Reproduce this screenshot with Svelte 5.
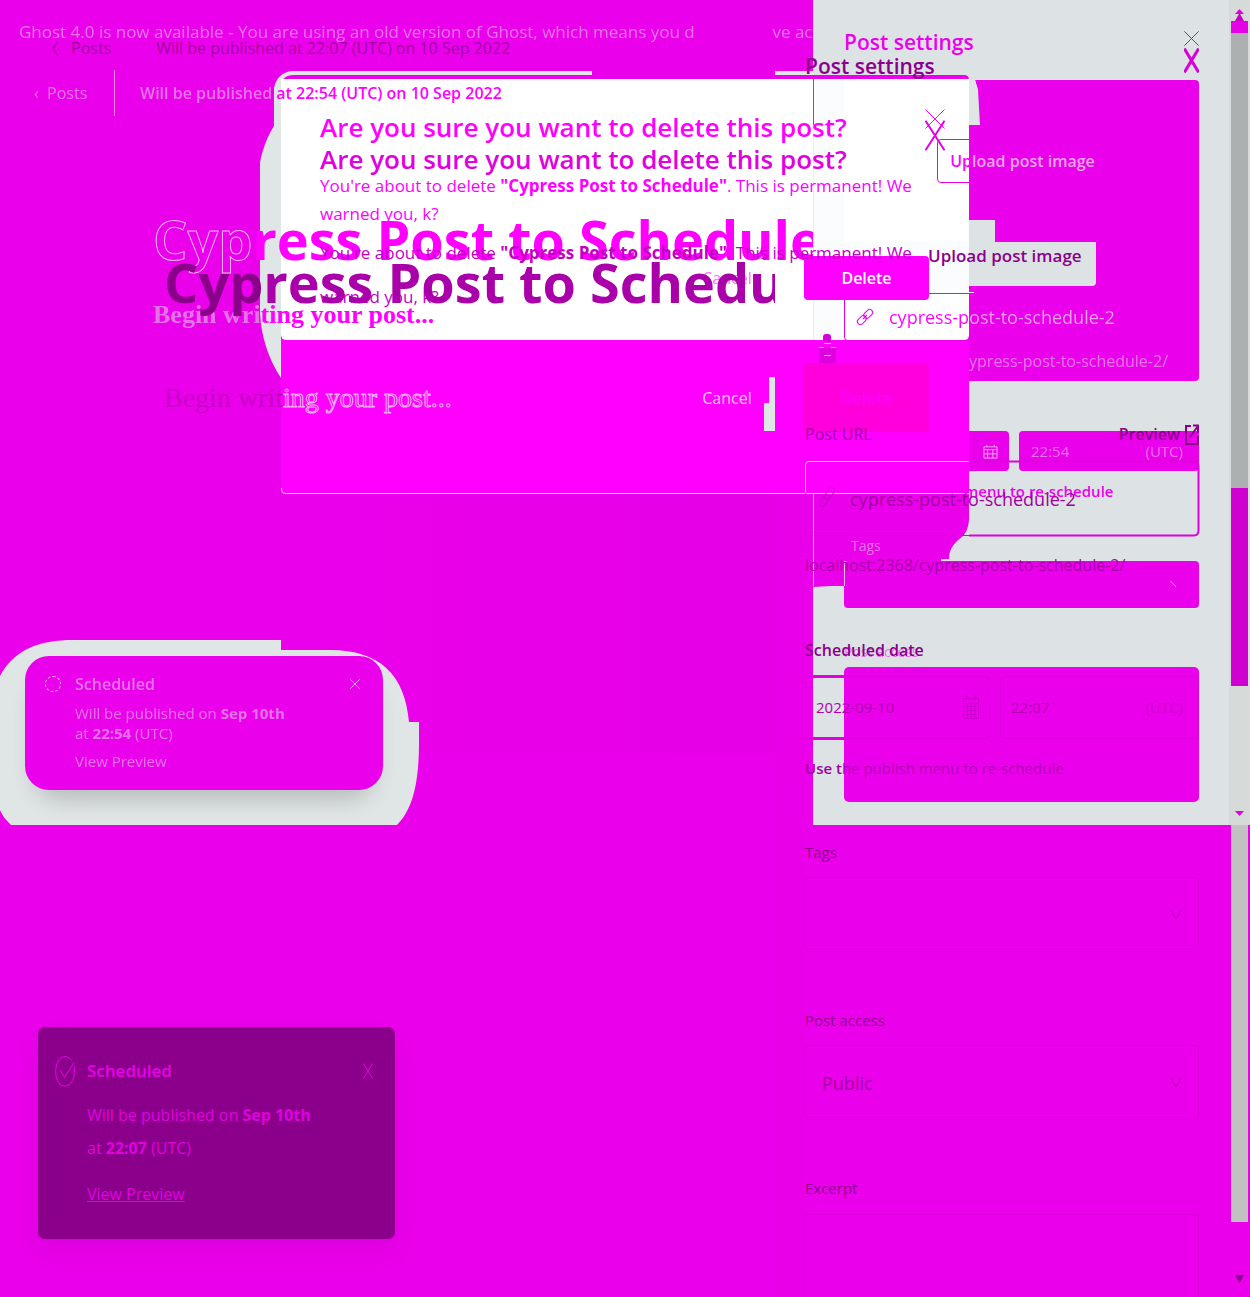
<script>
  const olderUrl = 'cypress-post-to-schedule-2';
</script>

{#snippet cross(cls)}
  <svg class={cls} viewBox="0 0 20 20" preserveAspectRatio="none" aria-hidden="true">
    <path d="M0.5 0.5L19.5 19.5M19.5 0.5L0.5 19.5" vector-effect="non-scaling-stroke" />
  </svg>
{/snippet}

<div class="page">
  <svg class="backdrop" viewBox="0 0 1250 1297" preserveAspectRatio="none" aria-hidden="true">
    <defs>
      <filter id="soft" x="-20%" y="-40%" width="140%" height="180%"><feGaussianBlur stdDeviation="11" /></filter>
      <clipPath id="halo"><path d="M281 640V650H330C380 650 405 675 409 722H419V742C419 785 412 810 397 825H11C5 819 2 815 0 810V676C14 650 38 640 74 640Z" /></clipPath>
      <linearGradient id="dusk" x1="0" y1="0" x2="1" y2="0">
        <stop offset="0" stop-color="#eb00eb" />
        <stop offset="1" stop-color="#e500e6" />
      </linearGradient>
    </defs>

    <rect x="281" y="493" width="494" height="260" fill="url(#dusk)" />
    <rect x="775" y="493" width="30" height="804" fill="#e900e9" />

    <rect x="813" width="437" height="825" fill="#dde2e4" />
    <rect x="1229" width="21" height="825" fill="#d6dad9" />
    <rect x="1231" y="21" width="17" height="12" fill="#e600e6" />
    <rect x="1231" y="33" width="17" height="455" fill="#acb0b0" />
    <rect x="1231" y="488" width="17" height="198" fill="#d000d0" />
    <rect x="1231" y="825" width="17" height="397" fill="#c1c1c1" />
    <path d="M1235 14L1239.500 9L1244 14Z" fill="#e000e0" />
    <path d="M1235 21L1239.500 13L1244 21Z" fill="#c400c4" />
    <path d="M1235 811H1244L1239.500 816Z" fill="#e000e0" />
    <path d="M1235 1275H1244L1239.500 1283Z" fill="#8b008b" />

    <g clip-path="url(#halo)">
      <rect y="640" width="420" height="185" fill="#e0e5e5" />
      <rect x="34" y="680" width="340" height="120" rx="26" fill="#b8bcbc" filter="url(#soft)" />
    </g>
    <rect x="25" y="656" width="358" height="134" rx="24" fill="#eb00eb" />

    <path d="M292 71H592V80H281V378C268 358 261 336 260 312V163C262 150 268 135 274 126V88C276 78 282 72 292 71ZM775 71H813V80H775Z" fill="#e0e5e5" />

    <path d="M975 80H1195Q1199 80 1199 84V377Q1199 381 1195 381H969V125H980L978 90Z" fill="#eb00eb" />
    <path d="M969 80H975L978 90V125H969Z" fill="#e0e5e5" />
    <path d="M969 220H995V242H1096V282Q1096 286 1092 286H969Z" fill="#dde2e4" />
    <path d="M969 292.500H974" stroke="#dde2e4" />

    <path d="M281 88Q281 75 294 75H964Q969 75 969 80V340H281Z" fill="#eb00eb" />
    <path d="M281 79H969V335Q969 340 964 340H286Q281 340 281 335Z" fill="#fff" />
    <path d="M813 79H969V340H813Z" fill="#fafcfe" />
    <path d="M844 79H969V242H844ZM844 293H969V340H844Z" fill="#fff" />
    <path d="M813.500 125V340" stroke="#e8edf0" />
    <path d="M813.500 79V125" stroke="#f0f" />
    <path d="M281 335Q281 340 286 340H964Q969 340 969 335V494H281Z" fill="#f0f" />
    <path d="M813 494H969V520C968 529 966 533 962 537C954 543 949 549 949 559H941V561H844V586H831L813 587Z" fill="#eb00eb" />
    <path d="M281.500 488Q281.500 493.500 285 493.500H969" fill="none" stroke="#e0e5e5" />
    <path d="M769 377H775V431H764V403H769Z" fill="#e0e5e5" />

    <rect x="823" y="334" width="8" height="8" rx="3" fill="#d800d8" />
    <path d="M819 348H836V363H819Z" fill="#df00df" />
    <path d="M819 347.500H824M831 347.500H836M824 343.500H831M824 355.500H831" stroke="#ecc8f0" />

    <path d="M969 431H1005Q1009 431 1009 435V467Q1009 471 1005 471H969Z" fill="#eb00eb" />
    <rect x="1019" y="431" width="180" height="40" rx="4" fill="#eb00eb" />
    <rect x="844" y="561" width="355" height="47" rx="4" fill="#eb00eb" />
    <rect x="844" y="667" width="355" height="135" rx="5" fill="#eb00eb" />

    <path d="M805.500 493V465Q805.500 461.500 809 461.500H969" fill="none" stroke="#f3c9f6" />
    <path d="M805.500 493V531Q805.500 535.500 809 535.500H969" fill="none" stroke="#dc00dc" />
    <path d="M969 461.500H1194Q1198.500 461.500 1198.500 466V530Q1198.500 535.500 1194 535.500H969" fill="none" stroke="#df00df" stroke-width="2" />
    <path d="M813.500 493V586M844.500 561V586" stroke="#e8b8ea" />
    <rect x="805.500" y="676.500" width="184" height="62" rx="4" fill="none" stroke="#dc00dc" />
    <rect x="1000.500" y="676.500" width="198" height="62" rx="4" fill="none" stroke="#dc00dc" />
    <path d="M813 676.500H844M813 738.500H844" stroke="#e200e2" stroke-width="3" />
  </svg>

  <div class="layer older">
    <p class="banner"><span class="speck">Ghost 4.0 is now available - You are using an old version of Ghost, which means you d</span><span class="speck tail">ve ac</span></p>
    <nav class="crumbs">
      <a class="speck" href="#posts">‹&nbsp; Posts</a>
      <span class="when"><span class="speck">Will be published</span> at 22:54 (UTC) on 10 Sep 2022</span>
    </nav>
    <div class="title"><span class="hollow">Cyp</span>ress Post to Schedule</div>
    <div class="begin"><span class="speck">Begin wri</span>ting your post...</div>
  </div>

  <aside class="layer side old-side" aria-label="Previous settings">
    <header class="row head"><h2>Post settings</h2><button aria-label="Close previous settings">{@render cross('x15')}</button></header>
    <button class="upload"><span>Up</span>load post image</button>
    <label class="url">
      <svg class="link" viewBox="0 0 16 16" aria-hidden="true"><g transform="rotate(-45 8 8)"><rect x="-1.500" y="5" width="10" height="6" rx="3" /><rect x="7.500" y="5" width="10" height="6" rx="3" /><path d="M5 8H11" /></g></svg>
      <input value={olderUrl} aria-label="Previous post URL" />
    </label>
    <p class="host speck">ypress-post-to-schedule-2/</p>
    <div class="row dates">
      <svg class="cal" viewBox="0 0 16 16" aria-hidden="true"><path d="M1 3H15V15H1ZM1 6H15M1 10.500H15M5 6V15M10.500 6V15M4 1V3M12 1V3" /></svg>
      <span class="speck time">22:54</span><span class="speck">(UTC)</span>
    </div>
    <p class="menu">menu to re-schedule</p>
    <p class="tags speck">Tags</p>
    <svg class="tick" viewBox="0 0 8 8" aria-hidden="true"><path d="M0.500 0.500L7 7.500" /></svg>
    <p class="access">Post access</p>
  </aside>

  <section class="layer dialog old-dialog" aria-label="Previous dialog">
    <div class="row"><h1>Are you sure you want to delete this post?</h1><button aria-label="Close previous dialog">{@render cross('x20')}</button></div>
    <p class="warn">You're about to delete <b>"Cypress Post to Schedule"</b>. This is permanent! We warned you, k?</p>
    <div class="acts"><button class="cancel">Cancel</button><button class="delete">Delete</button></div>
  </section>

  <section class="layer dialog new-dialog" aria-label="Delete post">
    <div class="row"><h1>Are you sure you want to delete this post?</h1><button aria-label="Close">{@render cross('x20 tall')}</button></div>
    <p class="warn">You're about to delete <b>"Cypress Post to Schedule"</b>. This is permanent! We warned you, k?</p>
    <div class="acts"><button class="cancel">Cancel</button><button class="delete">Delete</button></div>
  </section>

  <div class="layer newer">
    <nav class="crumbs">
      <a href="#posts"><svg class="back" viewBox="0 0 6 14" aria-hidden="true"><path d="M5 1L1 7L5 13" /></svg>Posts</a>
      <span>Will be published at 22:07 (UTC) on 10 Sep 2022</span>
    </nav>
    <div class="title"><span class="deep">Cyp</span>ress Post to Schedule</div>
    <div class="begin"><span class="faint">Begin writ</span><span class="hollow">ing your post...</span></div>
  </div>

  <aside class="layer side new-side" aria-label="Post settings">
    <header class="row head"><h2>Post settings</h2><button aria-label="Close settings">{@render cross('x15 tall')}</button></header>
    <button class="upload">Upload post image</button>
    <div class="row label-row">
      <label for="url">Post URL</label>
      <a href="#preview">Preview<svg class="out" viewBox="0 0 14 21" aria-hidden="true"><path d="M6 2H1V20H13V12M8 1.500H13V9M13 2L5 13" /></svg></a>
    </div>
    <div class="url">
      <svg class="link" viewBox="0 0 16 24" aria-hidden="true"><g transform="rotate(-55 8 12)"><rect x="-3" y="9" width="13" height="6" rx="3" /><rect x="6" y="9" width="13" height="6" rx="3" /></g></svg>
      <input id="url" value="cypress-post-to-schedule-2" />
    </div>
    <p class="host">localhost:2368/cypress-post-to-schedule-2/</p>
    <p class="sched">Scheduled date</p>
    <div class="dates">
      <div class="date"><input value="2022-09-10" aria-label="Date" />
        <svg class="cal" viewBox="0 0 16 24" aria-hidden="true"><path d="M0.500 3.500H15.500V23.500H0.500ZM0.500 8.500H15.500M3 11.500H13M3 15.500H13M3 19.500H13M4 9V23M8 9V23M12 9V23M4 0V5M12 0V5" /></svg>
      </div>
      <div class="date"><input value="22:07" aria-label="Time" /><span>(UTC)</span></div>
    </div>
    <p class="use"><span>Use t</span>he publish menu to re-schedule</p>
    <label class="cap" for="tags">Tags</label>
    <div class="pick"><input id="tags" /><svg class="chev" viewBox="0 0 12 11" aria-hidden="true"><path d="M0.500 0.500L6 10L11.500 0.500" /></svg></div>
    <label class="cap second" for="access">Post access</label>
    <div class="pick"><select id="access"><option>Public</option></select><svg class="chev" viewBox="0 0 12 11" aria-hidden="true"><path d="M0.500 0.500L6 10L11.500 0.500" /></svg></div>
    <label class="cap second" for="excerpt">Excerpt</label>
    <textarea id="excerpt"></textarea>
  </aside>

  <article class="layer toast old-toast">
    <header><i class="ring"></i><strong class="speck">Scheduled</strong><button aria-label="Dismiss previous notice">{@render cross('x10')}</button></header>
    <p class="speck">Will be published on <b>Sep 10th</b><br />at <b>22:54</b> (UTC)</p>
    <a class="speck" href="#old-preview">View Preview</a>
  </article>

  <article class="layer toast new-toast">
    <header>
      <svg class="ok" viewBox="0 0 20 32" aria-hidden="true"><path d="M16.500 5.500C12 -1 4.500 1 2 8.500C-1 18 1.500 28 7 30.500C14 33 19.500 26 19.500 16C19.500 14 19.300 12 19 10.500M5 15L9.500 22.500L19 7.500" /></svg>
      <strong>Scheduled</strong><button aria-label="Dismiss">{@render cross('x10 tall')}</button>
    </header>
    <p>Will be published on <b>Sep 10th</b><br />at <b>22:07</b> (UTC)</p>
    <a href="#preview">View Preview</a>
  </article>
</div>

<style>
  :global(body) { margin: 0; background: #eb00eb; }
  .page {
    position: relative;
    display: grid;
    grid-template-columns: minmax(0, 1fr);
    align-items: start;
    min-height: 100vh;
    overflow: hidden;
    background: #eb00eb;
    font-family: 'Open Sans', 'Noto Sans', sans-serif;
    font-size: 16px;
    line-height: 24px;
    color: #eb00eb;
  }
  .page * { box-sizing: border-box; }
  .backdrop { position: absolute; inset: 0; width: 100%; height: 100%; }
  .layer { grid-area: 1 / 1; position: relative; min-width: 0; }
  h1, h2, p { margin: 0; }
  button, input, select, textarea {
    font: inherit; color: inherit; background: none; border: 0; padding: 0; margin: 0; min-width: 0;
  }
  button { display: flex; align-items: center; justify-content: center; }
  select { appearance: none; }
  a { color: inherit; text-decoration: none; }
  svg { flex: none; fill: none; stroke: currentColor; }
  .backdrop { stroke: none; }
  .row { display: flex; justify-content: space-between; align-items: center; }
  .speck { color: #dde2e4; opacity: 0.5; }
  .hollow { color: transparent; -webkit-text-stroke: 1px #efb4f2; }
  .x20 { width: 20px; height: 20px; }
  .x15 { width: 15px; height: 15px; }
  .x10 { width: 10px; height: 10px; }
  .x20.tall { height: 31px; stroke-width: 2px; }
  .x15.tall { height: 25px; stroke-width: 3px; }
  .x10.tall { height: 16px; }

  .older, .newer { width: 65%; overflow: hidden; white-space: nowrap; color: #f0f; }
  .newer { width: 62%; }
  .banner { display: flex; padding: 20px 0 0 19px; font-size: 17px; }
  .tail { margin-left: auto; }
  .older .crumbs { display: flex; align-items: center; height: 46px; margin-top: 26px; }
  .older .crumbs a { width: 115px; height: 46px; padding-left: 34px; line-height: 46px; border-right: 1px solid #fff; }
  .when { padding-left: 25px; font-weight: 600; font-size: 16px; }
  .title { font-size: 54px; line-height: 72px; font-weight: 700; }
  .older .title { margin-top: 87px; padding-left: 153px; }
  .begin { font-family: 'Liberation Serif', serif; }
  .older .begin { margin-top: 24px; padding-left: 153px; font-size: 26px; line-height: 32px; font-weight: 700; }

  .newer .crumbs { display: flex; align-items: center; gap: 45px; padding: 36px 0 0 52px; color: #a000a0; font-size: 16px; }
  .newer .crumbs a { display: flex; align-items: center; gap: 12px; font-weight: 500; }
  .back { width: 7px; height: 17px; }
  .newer .title { margin-top: 186px; padding-left: 164px; color: #aa00aa; }
  .deep { color: #8b008b; }
  .newer .begin { margin-top: 60px; padding-left: 164px; font-size: 28px; line-height: 40px; }
  .faint { color: #c600c6; }

  .dialog { width: 688px; max-width: 100%; justify-self: center; padding: 0 24px 0 39px; color: #f0f; }
  h1 { font-size: 26px; line-height: 36px; font-weight: 600; white-space: nowrap; }
  .old-dialog { padding-top: 92px; }
  .old-dialog h1 { padding-top: 17px; }
  .new-dialog { padding-top: 117px; color: #e000e0; }
  .new-dialog .row { height: 36px; }
  .new-dialog h1 { padding-top: 48px; }
  .warn { margin-top: 27px; font-size: 17px; line-height: 28px; }
  .new-dialog .warn { margin-top: 78px; line-height: 44px; color: #c400c4; }
  .acts { display: flex; justify-content: flex-end; padding-right: 16px; }
  .cancel { width: 106px; margin-right: 24px; }
  .old-dialog .acts { margin-top: 28px; }
  .old-dialog .cancel { opacity: 0.6; }
  .delete { width: 125px; height: 44px; border-radius: 4px; color: #fff; background: #f0f; font-weight: 600; }
  .new-dialog .acts { margin-top: 44px; }
  .new-dialog .cancel { font-size: 16px; color: #f6c8f8; }
  .new-dialog .delete { height: 69px; background: #ff00dc; color: #f0f; font-size: 17px; }

  .side { justify-self: end; margin-right: 51px; }
  h2 { font-size: 21px; line-height: 28px; font-weight: 600; }
  .old-side { width: 355px; padding-top: 28px; }
  .old-side h2 { color: #eb00eb; }
  .old-side .head svg { color: #c800c8; margin-bottom: 7px; }
  .old-side .upload { width: 171px; height: 44px; margin: 83px 0 0 93px; border: 1px solid #eb00eb; border-radius: 4px; color: #e7a4ea; font-weight: 600; }
  .old-side .upload span { color: #f0f; }
  .old-side .url { display: flex; align-items: center; gap: 16px; height: 48px; margin-top: 110px; padding: 0 12px; border: 1px solid #eb00eb; border-radius: 4px; font-size: 18px; }
  .old-side .url input { flex: 1; font-weight: 500; color: transparent; background: linear-gradient(90deg, #f0f 80px, #e7a4ea 80px); -webkit-background-clip: text; background-clip: text; }
  .old-side .link { width: 16px; height: 16px; overflow: visible; }
  .old-side .host { margin-top: 8px; text-align: right; padding-right: 31px; font-size: 16px; }
  .old-side .dates { height: 40px; margin-top: 58px; padding: 0 16px 0 139px; font-size: 15px; }
  .old-side .cal { width: 15px; height: 15px; color: #eab0ee; }
  .old-side .time { margin: 0 auto 0 33px; }
  .menu { margin-top: 8px; padding-left: 120px; font-size: 15px; font-weight: 600; }
  .tags { margin-top: 31px; padding-left: 7px; font-size: 14px; }
  .tick { display: block; width: 7px; height: 8px; margin: 22px 0 0 326px; color: #eab0ee; }
  .access { margin-top: 52px; font-size: 14px; opacity: 0.5; }

  .new-side { width: 394px; padding-top: 48px; color: #8b008b; }
  .new-side .head { height: 25px; }
  .new-side h2 { padding-top: 10px; }
  .new-side .head button { color: #d800d8; }
  .new-side .upload { margin: 171px 0 0 123px; font-size: 17px; font-weight: 600; }
  .label-row { margin-top: 154px; font-weight: 500; }
  .label-row a { display: flex; align-items: center; gap: 5px; font-weight: 600; }
  .label-row label { color: #a000a0; }
  .out { width: 14px; height: 21px; stroke-width: 2px; }
  .new-side .url { display: flex; align-items: center; gap: 15px; height: 75px; margin-top: 15px; padding-left: 14px; font-size: 18px; }
  .new-side .url input { flex: 1; color: #a000a0; }
  .new-side .link { width: 16px; height: 24px; color: #c800c8; margin-bottom: 4px; }
  .new-side .host { margin-top: 17px; color: #a900a9; }
  .sched { margin-top: 61px; font-weight: 600; }
  .new-side .dates { display: grid; grid-template-columns: 185fr 199fr; gap: 10px; margin-top: 13px; color: #b000b0; }
  .date { display: flex; align-items: center; height: 63px; padding: 0 11px; font-size: 15px; }
  .date:last-child { padding-right: 16px; }
  .date input { flex: 1; width: 80px; }
  .date .cal { width: 16px; height: 24px; color: #cc00cc; }
  .date span { color: #cc00cc; }
  .use { margin-top: 18px; font-size: 15px; color: #b400b4; }
  .use span { color: #a000a0; font-weight: 600; }
  .cap { display: block; margin-top: 60px; font-size: 15px; color: #8b008b; font-weight: 500; }
  .cap.second { margin-top: 56px; }
  .pick { display: flex; align-items: center; height: 75px; margin-top: 13px; padding: 0 16px; border: 1px solid #dc00dc; border-radius: 4px; font-size: 18px; color: #a000a0; }
  .pick input, .pick select { flex: 1; }
  .chev { width: 12px; height: 11px; color: #b800b8; }
  textarea { display: block; width: 100%; height: 83px; margin-top: 14px; border: 1px solid #dc00dc; border-bottom: 0; border-radius: 4px 4px 0 0; resize: none; }

  .toast { width: 358px; font-size: 16px; }
  .toast header { display: flex; align-items: center; }
  .toast strong { flex: 1; font-weight: 600; }
  .toast p, .toast > a { margin-left: 50px; }
  .old-toast { margin: 656px 0 0 25px; padding: 16px 0; }
  .old-toast header { padding: 0 23px 0 20px; }
  .old-toast header svg { color: #f0a8f3; }
  .ring { width: 16px; height: 16px; margin-right: 14px; border: 1px dashed #eeb0f0; border-radius: 50%; }
  .old-toast p { margin-top: 7px; font-size: 15px; line-height: 20px; }
  .old-toast > a { display: inline-block; margin-top: 6px; font-size: 15px; }
  .new-toast { margin: 1027px 0 0 38px; width: 357px; height: 212px; padding: 28px 0; border-radius: 7px; background: #8b008b; box-shadow: 0 12px 28px rgba(170, 0, 170, 0.25); color: #e000e0; }
  .new-toast header { height: 32px; padding: 0 22px 0 17px; color: #eb00eb; }
  .ok { width: 20px; height: 32px; margin-right: 12px; }
  .new-toast strong { font-size: 17px; }
  .new-toast p { margin-top: 12px; line-height: 33px; font-size: 16px; margin-left: 49px; }
  .new-toast > a { display: inline-block; margin: 17px 0 0 49px; text-decoration: underline; }
</style>
